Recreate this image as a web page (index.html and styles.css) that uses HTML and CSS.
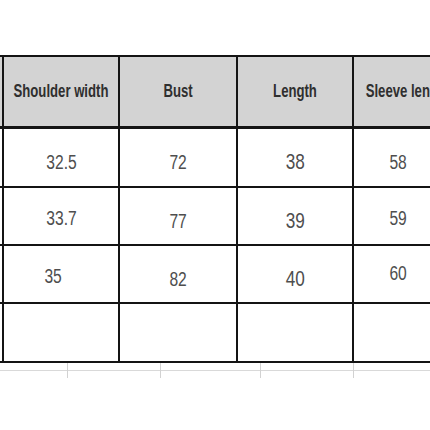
FILE: index.html
```html
<!DOCTYPE html>
<html lang="en">
<head>
<meta charset="utf-8">
<title>Size chart</title>
<link rel="stylesheet" href="styles.css">
</head>
<body>
<div class="sheet">
  <div class="chart">
    <div class="cell head edge"></div>
    <div class="cell head"><span class="h">Shoulder width</span></div>
    <div class="cell head"><span class="h">Bust</span></div>
    <div class="cell head"><span class="h">Length</span></div>
    <div class="cell head last-h"><span class="h">Sleeve length</span></div>

    <div class="cell edge"></div>
    <div class="cell r1"><span class="v">32.5</span></div>
    <div class="cell r1"><span class="v">72</span></div>
    <div class="cell r1"><span class="v big">38</span></div>
    <div class="cell r1 last-v"><span class="v">58</span></div>

    <div class="cell edge"></div>
    <div class="cell r2"><span class="v">33.7</span></div>
    <div class="cell r2 low"><span class="v">77</span></div>
    <div class="cell r2 low"><span class="v big">39</span></div>
    <div class="cell r2 last-v"><span class="v">59</span></div>

    <div class="cell edge"></div>
    <div class="cell r3 left"><span class="v">35</span></div>
    <div class="cell r3 low"><span class="v">82</span></div>
    <div class="cell r3 low"><span class="v big">40</span></div>
    <div class="cell r3 last-v high"><span class="v">60</span></div>

    <div class="cell edge"></div>
    <div class="cell"></div>
    <div class="cell"></div>
    <div class="cell"></div>
    <div class="cell"></div>
  </div>
  <div class="ruler">
    <span></span><span class="tick"></span><span class="tick"></span><span class="tick"></span><span class="tick"></span>
  </div>
</div>
</body>
</html>
```

FILE: styles.css
```css
* { box-sizing: border-box; }

html, body {
  margin: 0;
  padding: 0;
  background: #ffffff;
}

body {
  width: 430px;
  height: 430px;
  overflow: hidden;
  font-family: "Liberation Sans", Arial, sans-serif;
}

.sheet {
  width: 430px;
  overflow: hidden;
  padding-top: 55px;
}

.chart {
  display: grid;
  grid-template-columns: 4px 116px 118px 116px 117px;
  grid-template-rows: 72px 59px 58px 58px 59px;
  width: 471px;
  border-top: 2px solid #141414;
}

.cell {
  display: flex;
  align-items: center;
  justify-content: center;
  border-right: 2px solid #141414;
  border-bottom: 2px solid #141414;
  background: #ffffff;
  overflow: hidden;
  white-space: nowrap;
}

.head {
  background: #d3d3d3;
  border-bottom-width: 3px;
}

.h {
  display: inline-block;
  font-size: 18px;
  font-weight: bold;
  color: #2f2f2f;
  transform: scaleX(0.73);
}

.v {
  display: inline-block;
  font-size: 20px;
  color: #4e4e4e;
  transform: scaleX(0.78);
}

.v.big {
  font-size: 22px;
}

.r1 { padding-top: 9px; }
.r2 { padding-top: 5px; }
.r3 { padding-top: 4px; }
.r2.low { padding-top: 10px; }
.r3.low { padding-top: 10px; }
.r3.high { padding-top: 0; padding-bottom: 2px; }
.r3.left { padding-right: 16px; }

.last-h { padding-right: 6px; }
.last-v { padding-right: 27px; }

.ruler {
  display: grid;
  grid-template-columns: 67px 93px 100px 93px 1fr;
  height: 15px;
  background: linear-gradient(#d9d9d9, #d9d9d9) 0 7px / 100% 1px no-repeat;
}

.tick {
  border-left: 1px solid #d2d2d2;
}
```
